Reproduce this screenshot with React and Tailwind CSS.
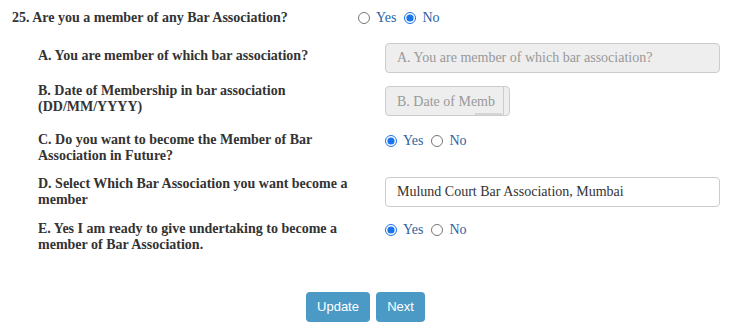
import { useState } from "react";

const serif = { fontFamily: '"Liberation Serif", "Times New Roman", serif' };

function RadioPair({ name, value, onChange }) {
    return (
        <div className="flex items-center text-[14px] leading-[16px] text-[#2d5fa6]">
            <input
                type="radio"
                name={name}
                checked={value === "yes"}
                onChange={() => onChange("yes")}
                className="m-0 h-[12px] w-[12px] accent-[#1a73e8]"
            />
            <span className="ml-[6px]">Yes</span>
            <input
                type="radio"
                name={name}
                checked={value === "no"}
                onChange={() => onChange("no")}
                className="m-0 ml-[8px] h-[12px] w-[12px] accent-[#1a73e8]"
            />
            <span className="ml-[6px]">No</span>
        </div>
    );
}

function SubRow({ label, children, className = "" }) {
    return (
        <div className={`flex items-start ${className}`}>
            <div className="w-[385px] shrink-0 pl-[38px] pr-[30px] text-[14px] font-bold leading-[16px] text-[#333]">
                {label}
            </div>
            <div className="flex-1">{children}</div>
        </div>
    );
}

export default function App() {
    const [member, setMember] = useState("no");
    const [future, setFuture] = useState("yes");
    const [undertaking, setUndertaking] = useState("yes");

    return (
        <div className="h-[333px] w-[748px] bg-white" style={serif}>
            {/* Question 25 */}
            <div className="flex items-center pt-[10px]">
                <div className="w-[358px] shrink-0 pl-[12px] text-[14px] font-bold leading-[16px] text-[#333]">
                    25. Are you a member of any Bar Association?
                </div>
                <RadioPair name="member" value={member} onChange={setMember} />
            </div>

            <SubRow
                className="mt-[17px]"
                label={<div className="pt-[5px]">A. You are member of which bar association?</div>}
            >
                <input
                    disabled
                    placeholder="A. You are member of which bar association?"
                    className="h-[30px] w-[335px] rounded-[4px] border border-[#ccc] bg-[#eee] px-[11px] text-[14px] placeholder:text-[#999]"
                />
            </SubRow>

            <SubRow
                className="mt-[10px]"
                label="B. Date of Membership in bar association (DD/MM/YYYY)"
            >
                <div className="relative mt-[3px] flex h-[30px] w-[125px] overflow-hidden rounded-[4px] border border-[#ccc] bg-[#eee]">
                    <input
                        disabled
                        placeholder="B. Date of Memb"
                        className="w-[117px] bg-transparent pl-[11px] pr-0 text-[14px] placeholder:text-[#999]"
                    />
                    <div className="flex-1 border-l border-[#ccc]" />
                    <div className="absolute bottom-0 left-[89px] h-[2px] w-[27px] bg-[#d5d5d5]" />
                </div>
            </SubRow>

            <SubRow
                className="mt-[16px]"
                label="C. Do you want to become the Member of Bar Association in Future?"
            >
                <div className="pt-[1px]">
                    <RadioPair name="future" value={future} onChange={setFuture} />
                </div>
            </SubRow>

            <SubRow
                className="mt-[12px]"
                label="D. Select Which Bar Association you want become a member"
            >
                <input
                    readOnly
                    value="Mulund Court Bar Association, Mumbai"
                    className="mt-[1px] h-[30px] w-[335px] rounded-[4px] border border-[#ccc] bg-white px-[11px] text-[14px] text-[#333]"
                />
            </SubRow>

            <SubRow
                className="mt-[13px]"
                label="E. Yes I am ready to give undertaking to become a member of Bar Association."
            >
                <div className="pt-[1px]">
                    <RadioPair name="undertaking" value={undertaking} onChange={setUndertaking} />
                </div>
            </SubRow>

            <div
                className="mt-[39px] flex gap-[6px] pl-[306px]"
                style={{ fontFamily: '"Liberation Sans", Arial, sans-serif' }}
            >
                <button className="h-[30px] w-[64px] rounded-[4px] bg-[#4b9ac6] text-[13px] text-white">
                    Update
                </button>
                <button className="h-[30px] w-[49px] rounded-[4px] bg-[#4b9ac6] text-[13px] text-white">
                    Next
                </button>
            </div>
        </div>
    );
}
